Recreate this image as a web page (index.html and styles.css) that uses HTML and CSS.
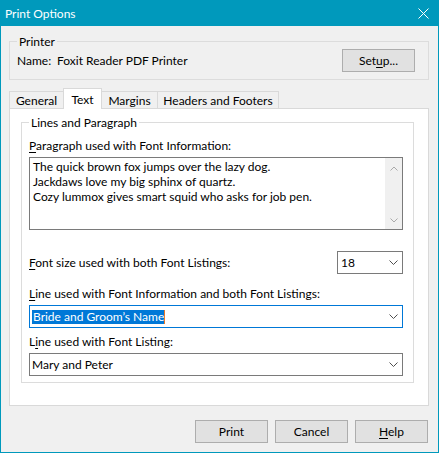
FILE: index.html
```html
<!DOCTYPE html>
<html>
<head>
<meta charset="utf-8">
<link rel="stylesheet" href="styles.css">
</head>
<body>
<div class="window">
  <div class="titlebar">
    <span class="title">Print Options</span>
    <svg class="close" width="11" height="11" viewBox="0 0 11 11"><path d="M0.5 0.5 L10.5 10.5 M10.5 0.5 L0.5 10.5" stroke="#fff" stroke-width="1" fill="none"/></svg>
  </div>
  <div class="content">
    <fieldset class="group printer">
      <legend>Printer</legend>
      <div class="printer-row">
        <span class="name-label">Name:</span>
        <span>Foxit Reader PDF Printer</span>
        <button class="btn setup">Set<u>u</u>p...</button>
      </div>
    </fieldset>

    <div class="tabstrip">
      <div class="tab tab-general">General</div>
      <div class="tab tab-text active">Text</div>
      <div class="tab tab-margins">Margins</div>
      <div class="tab tab-headers">Headers and Footers</div>
    </div>
    <div class="panel">
      <fieldset class="group lines">
        <legend>Lines and Paragraph</legend>
        <div class="label"><u>P</u>aragraph used with Font Information:</div>
        <div class="textbox">
          <div class="textbox-text">
            <div>The quick brown fox jumps over the lazy dog.</div>
            <div>Jackdaws love my big sphinx of quartz.</div>
            <div>Cozy lummox gives smart squid who asks for job pen.</div>
          </div>
          <div class="scrollbar">
            <svg width="8" height="5" viewBox="0 0 8 5"><path d="M0.5 4.5 L4 1 L7.5 4.5" stroke="#a9a9a9" fill="none"/></svg>
            <svg width="8" height="5" viewBox="0 0 8 5"><path d="M0.5 0.5 L4 4 L7.5 0.5" stroke="#a9a9a9" fill="none"/></svg>
          </div>
        </div>
        <div class="size-row">
          <div class="label-inline"><u>F</u>ont size used with both Font Listings:</div>
          <div class="combo combo-small">
            <span class="combo-value">18</span>
            <svg class="chev" width="9" height="5" viewBox="0 0 9 5"><path d="M0.5 0.5 L4.5 4.5 L8.5 0.5" stroke="#505050" fill="none"/></svg>
          </div>
        </div>
        <div class="label label-gap"><u>L</u>ine used with Font Information and both Font Listings:</div>
        <div class="combo combo-focus">
          <span class="combo-value"><span class="sel">Bride and Groom’s Name</span></span>
          <svg class="chev" width="9" height="5" viewBox="0 0 9 5"><path d="M0.5 0.5 L4.5 4.5 L8.5 0.5" stroke="#505050" fill="none"/></svg>
        </div>
        <div class="label label-gap2">L<u>i</u>ne used with Font Listing:</div>
        <div class="combo">
          <span class="combo-value">Mary and Peter</span>
          <svg class="chev" width="9" height="5" viewBox="0 0 9 5"><path d="M0.5 0.5 L4.5 4.5 L8.5 0.5" stroke="#505050" fill="none"/></svg>
        </div>
      </fieldset>
    </div>

    <div class="buttons">
      <button class="btn">Print</button>
      <button class="btn">Cancel</button>
      <button class="btn"><u>H</u>elp</button>
    </div>
  </div>
</div>
</body>
</html>
```
FILE: styles.css
```css
* { box-sizing: border-box; }
html, body { margin: 0; padding: 0; }
body {
  font-family: "Segoe UI", Lato, "Noto Sans", sans-serif;
  font-size: 12px;
  line-height: 15px;
  color: #000;
  background: #ffffff;
}
u { text-underline-offset: 2px; }

.window {
  width: 439px;
  height: 453px;
  border: 1px solid #0099bc;
  background: #f0f0f0;
  display: flex;
  flex-direction: column;
}

.titlebar {
  height: 25px;
  flex: none;
  background: #0099bc;
  color: #fff;
  display: flex;
  align-items: center;
  justify-content: space-between;
  padding: 0 9px 0 4px;
}
.title { line-height: 15px; }
.close { display: block; }

.content {
  padding: 8px 9px 9px 8px;
  display: flex;
  flex-direction: column;
}

fieldset.group {
  margin: 0;
  border: 1px solid #dcdcdc;
  min-width: 0;
}
fieldset.group legend {
  padding: 0 2px;
  line-height: 15px;
}

.printer { padding: 0 13px 7px 7px; }
.printer-row {
  display: flex;
  align-items: center;
}
.name-label { width: 40px; }

.btn {
  font: inherit;
  color: #000;
  width: 73px;
  height: 23px;
  background: #e1e1e1;
  border: 1px solid #adadad;
  padding: 0;
  margin: 0;
  line-height: 15px;
}
.setup { margin-left: auto; }

.tabstrip {
  margin-top: 8px;
  height: 20px;
  display: flex;
  align-items: flex-end;
}
.tab {
  height: 17px;
  border: 1px solid #d9d9d9;
  border-bottom: none;
  background: #f0f0f0;
  display: flex;
  align-items: center;
  justify-content: center;
  padding-top: 1px;
  margin-left: -1px;
}
.tab-general { width: 55px; margin-left: 0; }
.tab-text { width: 39px; }
.tab-margins { width: 57px; }
.tab-headers { width: 122px; }
.tab.active {
  height: 21px;
  background: #fff;
  margin-bottom: -1px;
  position: relative;
  z-index: 1;
  padding-top: 0;
}

.panel {
  border: 1px solid #d9d9d9;
  background: #fff;
  padding: 6px 14px 22px 11px;
}

.lines { padding: 8px 10px 6px 7px; }
.label { margin-bottom: 4px; }
.label-gap { margin-top: 12px; }
.label-gap2 { margin-top: 6px; }

.textbox {
  height: 73px;
  border: 1px solid #7a7a7a;
  background: #fff;
  display: flex;
}
.textbox-text {
  flex: 1;
  padding: 1px 3px;
}
.scrollbar {
  width: 17px;
  background: #f0f0f0;
  display: flex;
  flex-direction: column;
  align-items: center;
  justify-content: space-between;
  padding: 8px 0 6px;
}
.scrollbar svg { display: block; }

.size-row {
  margin-top: 21px;
  display: flex;
  align-items: center;
  justify-content: space-between;
}

.combo {
  height: 23px;
  border: 1px solid #7a7a7a;
  background: #fff;
  display: flex;
  align-items: center;
  padding: 0 4px 0 2px;
}
.combo-small { width: 66px; padding-left: 3px; }
.combo-focus { border-color: #0078d7; }
.combo-value { flex: 1; white-space: nowrap; }
.chev { display: block; flex: none; }
.sel {
  background: #0078d7;
  color: #fff;
  padding: 0 0 0 1px;
  border-right: 1px solid #e87a2a;
  display: inline-block;
  line-height: 14px;
}

.buttons {
  margin-top: 14px;
  display: flex;
  justify-content: flex-end;
  gap: 7px;
  padding-right: 1px;
}
```
